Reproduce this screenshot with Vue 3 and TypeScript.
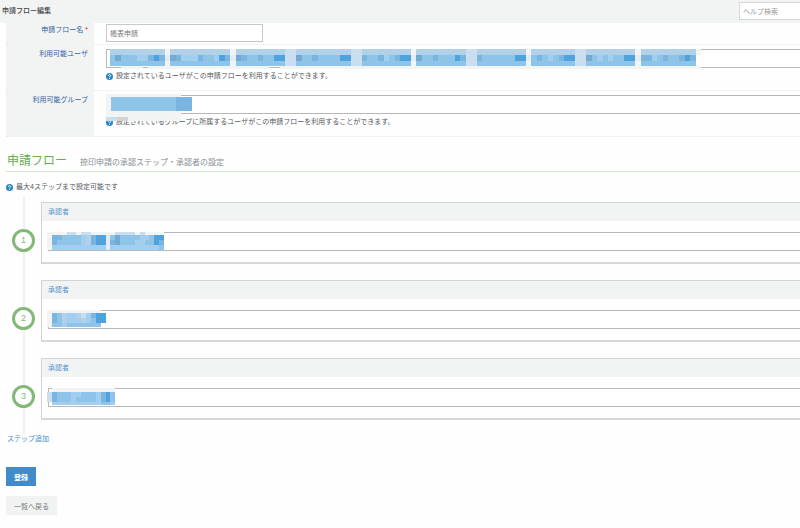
<script setup lang="ts">
import { ref } from 'vue'

interface Cell { x: number; y: number; w: number; h: number; c: string }

const palette: Record<string, string> = {
  g: '#f2f4f4', a: '#e1ecf4', b: '#c9dff0', c: '#b0d1e8', d: '#a2cfef',
  e: '#8ec4e8', f: '#79b5df', h: '#4ea2de', i: '#76a9d2', p: '#d9d0d2',
}

/** Turns rows of palette letters into cells; a dot leaves a hole. */
function mosaic(rows: string[], heights: number[]): Cell[] {
  const cells: Cell[] = []
  let y = 0
  rows.forEach((row, r) => {
    let x = 0
    while (x < row.length) {
      let end = x + 1
      while (end < row.length && row[end] === row[x]) end++
      if (row[x] !== '.') cells.push({ x, y, w: end - x, h: heights[r], c: palette[row[x]] })
      x = end
    }
    y += heights[r]
  })
  return cells
}

const userBlocks: [string, number][] = [
  ['eieeeddfhf', 1], ['ifdddfeedhf', 1], ['ifeefeehh', 2], ['ieefeeeehh', 2],
  ['feefdefhh', 1], ['ieefeeehf', 2], ['feeeeeehh', 1], ['efedefhh', 2],
  ['iededeehh', 1], ['ffdefeefhf', 1],
]
const edgeRow = (fill: string) =>
  userBlocks.map(([p, gap]) => fill.repeat(p.length) + (gap === 1 ? 'g' : 'bb')).join('')
const midRow = userBlocks.map(([p, gap]) => p + (gap === 1 ? 'a' : 'bb')).join('').slice(0, -1)
const userCells = mosaic(
  [edgeRow('c'), midRow, edgeRow('e').slice(0, -1), '..gggg.' + 'g'.repeat(22) + '..' + 'g'.repeat(77)],
  [6, 6, 5, 3],
)
const groupCells = mosaic(
  ['gggggggggggggg..', 'geeeeeeeeeeeefff', 'gggggggggggggg..', 'bbppgggggggggg..'],
  [3, 14, 6, 4],
)

const steps = ref([
  {
    id: 1,
    cells: mosaic(
      ['ggggbbgbbgggggbbbbgbgggg', 'gffeeeedcfhhaeieeeeddehh', 'gfeeeeedcfhhafieeeddeehf', 'gdddddddddddadddddddddde'],
      [3, 5, 5, 5],
    ),
  },
  { id: 2, cells: mosaic(['ggggggggggg', 'gfecddcbdfhh', 'gfecdddcdehh', 'geedeeeeeee'], [3, 5, 5, 4]) },
  { id: 3, cells: mosaic(['.ggggggggggggg', 'bfeeeddeeedfhe', 'bfeeedeeeedfhe', '.ddddddddddeed'], [4, 5, 5, 3]) },
])

const flowName = ref('帳表申請')
</script>

<template>
  <header class="topbar">
    <h1>申請フロー編集</h1>
    <input class="search" type="search" placeholder="ヘルプ検索" aria-label="ヘルプ検索" />
  </header>
  <main>
    <form @submit.prevent>
      <section class="settings">
        <div class="row">
          <label for="name">申請フロー名<span class="required">*</span></label>
          <div class="value"><input id="name" v-model="flowName" class="name" type="text" /></div>
        </div>
        <div class="row">
          <label for="users">利用可能ユーザ</label>
          <div class="value">
            <div class="picker">
              <input id="users" type="text" />
              <svg class="mask users" viewBox="0 0 108 20" preserveAspectRatio="none" aria-hidden="true">
                <rect v-for="(q, i) in userCells" :key="i" :x="q.x" :y="q.y" :width="q.w" :height="q.h" :fill="q.c" />
              </svg>
            </div>
            <p class="hint">
              <svg class="help" viewBox="0 0 14 14" aria-hidden="true"><circle cx="7" cy="7" r="7" /><path d="M4.7 5.4C4.7 2.6 9.3 2.6 9.3 5.3C9.3 6.9 7 6.8 7 8.6M7 9.8V11.5" /></svg>
              設定されているユーザがこの申請フローを利用することができます。
            </p>
          </div>
        </div>
        <div class="row">
          <label for="groups">利用可能グループ</label>
          <div class="value">
            <div class="picker">
              <input id="groups" type="text" />
              <svg class="mask groups" viewBox="0 0 16 27" preserveAspectRatio="none" aria-hidden="true">
                <rect v-for="(q, i) in groupCells" :key="i" :x="q.x" :y="q.y" :width="q.w" :height="q.h" :fill="q.c" />
              </svg>
            </div>
            <p class="hint">
              <svg class="help" viewBox="0 0 14 14" aria-hidden="true"><circle cx="7" cy="7" r="7" /><path d="M4.7 5.4C4.7 2.6 9.3 2.6 9.3 5.3C9.3 6.9 7 6.8 7 8.6M7 9.8V11.5" /></svg>
              設定されているグループに所属するユーザがこの申請フローを利用することができます。
            </p>
          </div>
        </div>
      </section>

      <div class="heading">
        <h2>申請フロー</h2>
        <p>捺印申請の承認ステップ・承認者の設定</p>
      </div>
      <p class="hint limit">
        <svg class="help" viewBox="0 0 14 14" aria-hidden="true"><circle cx="7" cy="7" r="7" /><path d="M4.7 5.4C4.7 2.6 9.3 2.6 9.3 5.3C9.3 6.9 7 6.8 7 8.6M7 9.8V11.5" /></svg>
        最大4ステップまで設定可能です
      </p>

      <ol class="steps">
        <li v-for="step in steps" :key="step.id">
          <span class="number">{{ step.id }}</span>
          <div class="card">
            <label :for="'approver' + step.id">承認者</label>
            <div class="card-body">
              <div class="picker">
                <input :id="'approver' + step.id" type="text" />
                <svg class="mask approver" viewBox="0 0 24 18" preserveAspectRatio="none" aria-hidden="true">
                  <rect v-for="(q, i) in step.cells" :key="i" :x="q.x" :y="q.y" :width="q.w" :height="q.h" :fill="q.c" />
                </svg>
              </div>
            </div>
          </div>
        </li>
      </ol>
      <a class="add" href="#add">ステップ追加</a>
      <div class="actions">
        <button class="primary" type="submit">登録</button>
        <button type="button">一覧へ戻る</button>
      </div>
    </form>
  </main>
</template>

<style>
body {
  overflow-x: hidden;
  background: #fefefe;
}
</style>

<style scoped>
* { box-sizing: border-box; }
h1, h2, p, ol { margin: 0; padding: 0; }
.topbar, main, input, button {
  font-family: "Liberation Sans", "Noto Sans CJK JP", sans-serif;
  font-size: 7px;
}
.topbar {
  display: flex;
  justify-content: space-between;
  height: 23px;
  padding: 2px 0 3px 2px;
  background: #f2f4f4;
}
h1 {
  font-size: 7px;
  line-height: 17px;
  font-weight: 500;
  color: #444;
}
input {
  display: block;
  border: 1px solid #c6c8c9;
  border-radius: 0;
  background: #fff;
  color: #777;
  padding: 0 3px;
  outline: none;
}
.search {
  width: 64px;
  height: 18px;
  margin-right: -3px;
  border-color: #d5d8d9;
}
.search::placeholder { color: #999; }
main {
  padding-left: 6px;
  color: #555b62;
}
.row {
  display: flex;
  border-bottom: 1px dotted #e6e8e8;
}
.row label {
  flex: none;
  width: 88px;
  padding: 2px 6px 0 0;
  background: #f2f4f4;
  color: #336199;
  line-height: 10px;
  text-align: right;
}
.row + .row label { padding-top: 4px; }
.required { padding: 0 0 0 2px; color: #f00; }
.value {
  flex: 1;
  padding: 1px 0 2px 12px;
}
.row + .row .value { padding: 4px 0 9px 12px; }
.name { width: 157px; height: 18px; }
.picker { position: relative; }
.picker input {
  width: 100%;
  height: 19px;
  border-color: #b5b7b8;
  border-right: 0;
}
.mask {
  position: absolute;
  shape-rendering: crispEdges;
}
.users { left: 4px; top: 0; width: 591px; height: 20px; }
.groups { left: 0; top: -1px; width: 86px; height: 27px; }
.approver { left: -1px; top: 0; width: 117px; height: 18px; }
.hint {
  display: flex;
  align-items: center;
  gap: 3px;
  line-height: 10px;
  margin-top: 3px;
}
.help {
  width: 7px;
  height: 7px;
  flex: none;
}
.help circle { fill: #2d84c5; }
.help path { fill: none; stroke: #fff; stroke-width: 2; }
.heading {
  display: flex;
  align-items: baseline;
  gap: 13px;
  margin-top: 15px;
  padding: 0 0 1px 1px;
  border-bottom: 1px solid #d3e9ca;
}
h2 {
  font-size: 12px;
  line-height: 18px;
  font-weight: 400;
  color: #69ad4e;
}
.heading p { font-size: 8px; color: #888e94; }
.limit { margin-top: 10px; }
.steps {
  position: relative;
  display: grid;
  gap: 16px;
  padding: 10px 0 14px;
  list-style: none;
}
.steps::before {
  content: "";
  position: absolute;
  left: 17px;
  top: 5px;
  bottom: 0;
  width: 2px;
  background: #f0f2f2;
}
.steps li {
  position: relative;
  display: flex;
  gap: 6px;
  padding-left: 6px;
}
.number {
  flex: none;
  width: 23px;
  height: 23px;
  margin-top: 27px;
  border: 3px solid #83b878;
  border-radius: 50%;
  background: #fff;
  color: #83b878;
  font-size: 9px;
  line-height: 17px;
  text-align: center;
}
.card {
  flex: 1;
  border: 1px solid #d2d4d4;
  border-bottom: 2px solid #d8dada;
  border-right: 0;
}
.card label {
  display: block;
  padding-left: 6px;
  background: #f2f4f4;
  color: #5a96cc;
  line-height: 18px;
}
.card-body { padding: 11px 0 11px 6px; }
.add {
  display: block;
  width: max-content;
  padding-left: 1px;
  color: #428bca;
  line-height: 10px;
  text-decoration: none;
}
.actions {
  display: flex;
  flex-direction: column;
  align-items: flex-start;
  gap: 10px;
  margin-top: 23px;
}
button {
  height: 19px;
  padding: 0 8px;
  border: 0;
  background: #f1f3f3;
  color: #777;
}
.primary { background: #428bca; color: #fff; font-weight: 700; }
</style>
